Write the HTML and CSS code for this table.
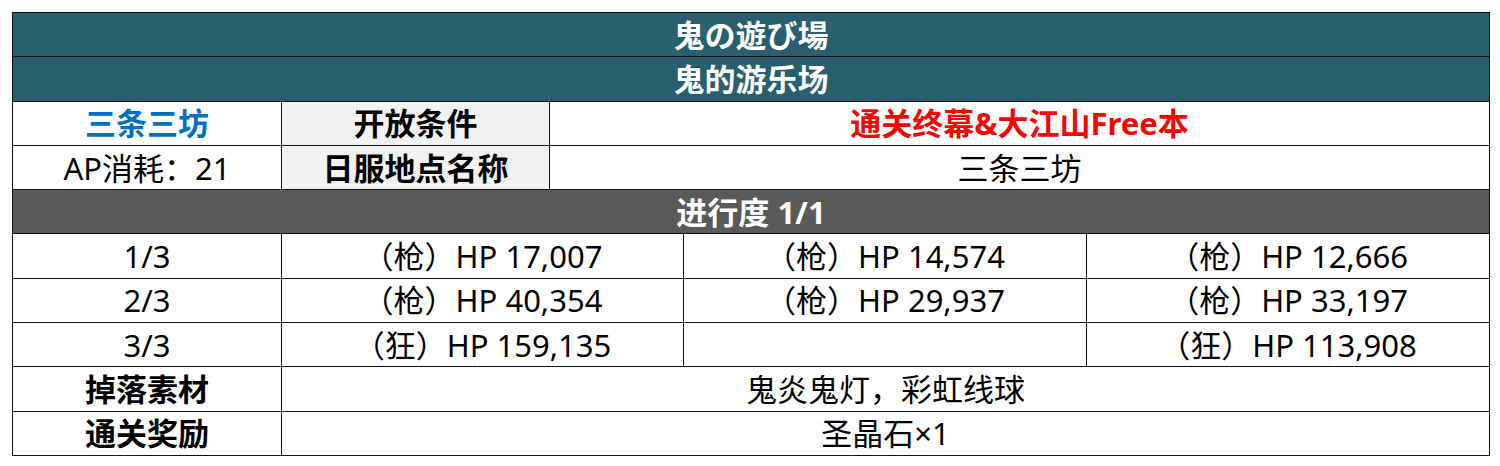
FILE: index.html
```html
<!DOCTYPE html>
<html lang="zh">
<head>
<meta charset="utf-8">
<link rel="stylesheet" href="styles.css">
</head>
<body>
<table class="quest">
  <colgroup>
    <col class="c1"><col class="c2"><col class="c3"><col class="c4"><col class="c5">
  </colgroup>
  <tr><td colspan="5" class="head">鬼の遊び場</td></tr>
  <tr><td colspan="5" class="head">鬼的游乐场</td></tr>
  <tr>
    <td class="blue">三条三坊</td>
    <td class="label">开放条件</td>
    <td colspan="3" class="red">通关终幕&amp;大江山Free本</td>
  </tr>
  <tr>
    <td>AP消耗：21</td>
    <td class="label">日服地点名称</td>
    <td colspan="3">三条三坊</td>
  </tr>
  <tr><td colspan="5" class="prog">进行度 1/1</td></tr>
  <tr>
    <td>1/3</td>
    <td colspan="2">（枪）HP 17,007</td>
    <td>（枪）HP 14,574</td>
    <td>（枪）HP 12,666</td>
  </tr>
  <tr>
    <td>2/3</td>
    <td colspan="2">（枪）HP 40,354</td>
    <td>（枪）HP 29,937</td>
    <td>（枪）HP 33,197</td>
  </tr>
  <tr>
    <td>3/3</td>
    <td colspan="2">（狂）HP 159,135</td>
    <td></td>
    <td>（狂）HP 113,908</td>
  </tr>
  <tr>
    <td class="bold">掉落素材</td>
    <td colspan="4">鬼炎鬼灯，彩虹线球</td>
  </tr>
  <tr>
    <td class="bold">通关奖励</td>
    <td colspan="4">圣晶石×1</td>
  </tr>
</table>
</body>
</html>
```
FILE: styles.css
```css
html, body {
  margin: 0;
  padding: 0;
  background: #ffffff;
}
body {
  padding: 12px 0 0 12px;
  font-family: "Noto Sans", "Noto Sans CJK SC", sans-serif;
  color: #000;
}
.quest {
  border-collapse: collapse;
  table-layout: fixed;
  width: 1477px;
}
.c1 { width: 269px; }
.c2 { width: 268px; }
.c3 { width: 134px; }
.c4 { width: 403px; }
.c5 { width: 403px; }
.quest td {
  border: 1px solid #111;
  height: 43.3px;
  padding: 0;
  text-align: center;
  vertical-align: middle;
  font-size: 31px;
  line-height: 34px;
  white-space: nowrap;
  overflow: hidden;
}
.quest td.head {
  background: #285e6e;
  color: #fff;
  font-weight: bold;
}
.quest td.prog {
  background: #595959;
  color: #fff;
  font-weight: bold;
}
.quest td.label {
  background: #f2f2f2;
  font-weight: bold;
}
.quest td.bold {
  font-weight: bold;
}
.quest td.blue {
  color: #0070c0;
  font-weight: bold;
}
.quest td.red {
  color: #ff0000;
  font-weight: bold;
}
```
